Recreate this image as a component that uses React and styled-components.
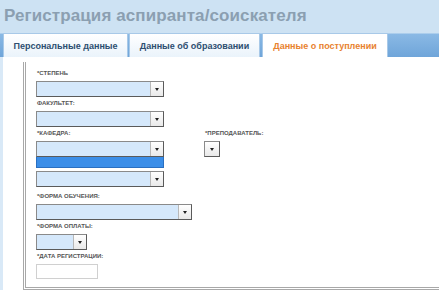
import styled, { createGlobalStyle } from "styled-components";

const GlobalStyle = createGlobalStyle`
  html, body {
    margin: 0;
    padding: 0;
    background: #ffffff;
    font-family: "Liberation Sans", Arial, sans-serif;
  }
`;

const Page = styled.div`
  width: 439px;
  height: 295px;
  overflow: hidden;
  background: #ffffff;
`;

const Header = styled.div`
  height: 31px;
  background: #cde2f3;
  display: flex;
  align-items: center;
  padding-left: 4px;
`;

const Title = styled.h1`
  margin: 0;
  font-size: 17px;
  font-weight: bold;
  color: #8b9fb1;
  letter-spacing: 0.1px;
`;

const TabBar = styled.div`
  height: 26px;
  display: flex;
  align-items: flex-end;
  padding-left: 3px;
  background: linear-gradient(#cde2f3 0, #cde2f3 2px, #8ab9e5 3px, #6fa5d9 100%);
`;

const Tab = styled.div`
  height: 24px;
  width: ${(p) => p.$w}px;
  margin-right: ${(p) => (p.$active ? 0 : 1)}px;
  margin-left: ${(p) => (p.$active ? 1 : 0)}px;
  box-sizing: border-box;
  display: flex;
  align-items: center;
  justify-content: center;
  border: 1px solid #a8c9e8;
  border-bottom: none;
  background: ${(p) =>
    p.$active ? "#ffffff" : "linear-gradient(#ffffff, #eaf3fb)"};
  color: ${(p) => (p.$active ? "#e8822f" : "#2d4e70")};
  font-size: 9px;
  font-weight: bold;
`;

const Content = styled.div`
  border-left: 3px solid #d9e9f7;
  padding: 5px 0 0 20px;
`;

const Fieldset = styled.div`
  width: 600px;
  border-left: 3px double #a8a8a8;
  border-bottom: 3px double #a8a8a8;
  padding: 7px 0 6px 10px;
  display: flex;
  flex-direction: column;
`;

const Field = styled.div`
  display: flex;
  flex-direction: column;
  align-items: flex-start;
  margin-bottom: ${(p) => p.$mb ?? 2}px;
`;

const Label = styled.div`
  font-size: 6px;
  line-height: 8px;
  font-weight: bold;
  color: #555555;
  text-transform: uppercase;
  margin-bottom: 4px;
  padding-left: 1px;
`;

const Row = styled.div`
  display: grid;
  grid-template-columns: 168px auto;
`;

const SelectBox = styled.div`
  width: ${(p) => p.$w}px;
  height: 16px;
  box-sizing: border-box;
  display: flex;
  justify-content: flex-end;
  background: #d5e8fb;
  border: 1px solid #8a8a8a;
  border-right-color: #5a5a5a;
  border-bottom-color: #5a5a5a;
`;

const ArrowButton = styled.div`
  width: ${(p) => (p.$only ? "100%" : "13px")};
  height: 100%;
  box-sizing: border-box;
  background: linear-gradient(#ffffff, #e9e9e9);
  border-left: ${(p) => (p.$only ? "none" : "1px solid #b8b8b8")};
  display: flex;
  align-items: center;
  justify-content: center;

  &::after {
    content: "";
    border-left: 2.5px solid transparent;
    border-right: 2.5px solid transparent;
    border-top: 3px solid #222222;
  }
`;

const OpenList = styled.div`
  width: ${(p) => p.$w}px;
  height: 11px;
  box-sizing: border-box;
  background: #3b8ee8;
  border: 1px solid #2a6fc0;
  border-top: none;
`;

const DateInput = styled.div`
  width: 62px;
  height: 15px;
  box-sizing: border-box;
  border: 1px solid #d0d0d0;
  background: #ffffff;
`;

function Select({ w, only }) {
  return (
    <SelectBox $w={w}>
      <ArrowButton $only={only} />
    </SelectBox>
  );
}

export default function App() {
  return (
    <Page>
      <GlobalStyle />
      <Header>
        <Title>Регистрация аспиранта/соискателя</Title>
      </Header>
      <TabBar>
        <Tab $w={125}>Персональные данные</Tab>
        <Tab $w={131}>Данные об образовании</Tab>
        <Tab $w={126} $active>
          Данные о поступлении
        </Tab>
      </TabBar>
      <Content>
        <Fieldset>
          <Field>
            <Label>*Степень</Label>
            <Select w={128} />
          </Field>
          <Field>
            <Label>Факультет:</Label>
            <Select w={128} />
          </Field>
          <Row>
            <Field $mb={3}>
              <Label>*Кафедра:</Label>
              <Select w={128} />
              <OpenList $w={128} />
            </Field>
            <Field>
              <Label>*Преподаватель:</Label>
              <Select w={16} only />
            </Field>
          </Row>
          <Field $mb={5}>
            <Select w={128} />
          </Field>
          <Field>
            <Label>*Форма обучения:</Label>
            <Select w={156} />
          </Field>
          <Field>
            <Label>*Форма оплаты:</Label>
            <Select w={51} />
          </Field>
          <Field>
            <Label>*Дата регистрации:</Label>
            <DateInput />
          </Field>
        </Fieldset>
      </Content>
    </Page>
  );
}
